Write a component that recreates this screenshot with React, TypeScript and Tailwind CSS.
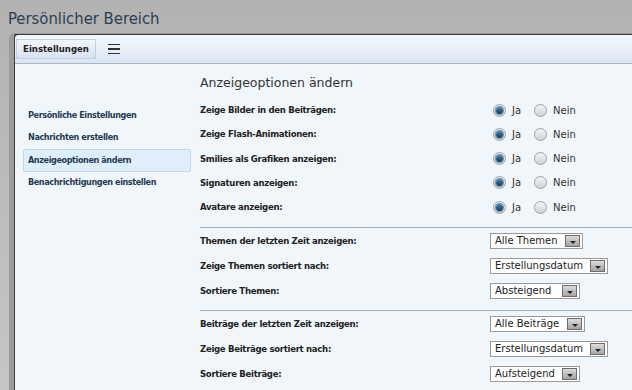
import React from "react";

const font = { fontFamily: "'DejaVu Sans', Verdana, sans-serif" };
const cond = { fontFamily: "'DejaVu Sans Condensed', 'DejaVu Sans', sans-serif" };

function Radio({ checked }: { checked?: boolean }) {
  return (
    <span className="relative inline-flex h-[13px] w-[13px] items-center justify-center rounded-full border border-[#9aa3ab] bg-gradient-to-b from-[#f4f4f4] to-[#cfd3d6]">
      {checked && (
        <span className="h-[7px] w-[7px] rounded-full bg-gradient-to-b from-[#4a86b4] to-[#0d3c63] shadow-[0_0_0_1px_#6a8aa6]" />
      )}
    </span>
  );
}

function YesNo() {
  return (
    <div className="flex items-center pl-[3px] text-[10px] text-[#333]">
      <Radio checked />
      <span className="ml-[6px] w-[22px]">Ja</span>
      <Radio />
      <span className="ml-[6px]">Nein</span>
    </div>
  );
}

function Select({ value, width }: { value: string; width: string }) {
  return (
    <div
      className={`flex h-[16px] items-center justify-between border border-[#9b9b9b] bg-white pl-[4px] pr-[2px] text-[10px] text-[#222] ${width}`}
    >
      <span className="leading-none">{value}</span>
      <span className="flex h-[12px] w-[15px] items-end justify-center border border-[#6e6e6e] bg-gradient-to-b from-[#dcdcdc] to-[#a4a4a4] pb-[2px]">
        <span className="h-0 w-0 border-x-[3px] border-t-[3px] border-x-transparent border-t-[#222]" />
      </span>
    </div>
  );
}

function Row({ label, children, h = "h-[24.25px]" }: { label: string; children: React.ReactNode; h?: string }) {
  return (
    <div className={`flex items-center ${h}`}>
      <span style={cond} className="w-[290px] whitespace-nowrap text-[9.5px] font-bold tracking-[-0.3px] text-[#222]">
        {label}
      </span>
      {children}
    </div>
  );
}

export default function App() {
  const nav = [
    "Persönliche Einstellungen",
    "Nachrichten erstellen",
    "Anzeigeoptionen ändern",
    "Benachrichtigungen einstellen",
  ];

  return (
    <div
      style={font}
      className="flex h-[390px] w-[632px] flex-col overflow-hidden bg-gradient-to-b from-[#b2b2b2] to-[#c6c6c6]"
    >
      <div style={cond} className="h-[33px] pl-[8px] pt-[8px] text-[16.5px] leading-[22px] text-[#2c3e50]">
        Persönlicher Bereich
      </div>
      <div className="ml-[9px] flex flex-1 flex-col rounded-tl-[6px] border-l-[5px] border-t border-[#9c9c9c] bg-[#3d3d3d] pl-[1px] pt-[1px]">
        <div className="flex flex-1 flex-col overflow-hidden rounded-tl-[4px] bg-[#f0f6fa]">
          <div className="flex h-[29px] items-center border-b border-[#a7b7c7] bg-gradient-to-b from-[#f4f8fd] to-[#dbe6f2] pl-[1px]">
            <div
              style={cond}
              className="flex h-[20px] w-[80px] items-center justify-center border border-[#c3cfdc] bg-gradient-to-b from-[#f2f6fb] to-[#d8e3ef] text-[9.5px] font-bold text-[#222]"
            >
              Einstellungen
            </div>
            <div className="ml-[12px] flex w-[12px] flex-col gap-[3px]">
              <span className="h-[1.5px] bg-[#333]" />
              <span className="h-[1.5px] bg-[#333]" />
              <span className="h-[1.5px] bg-[#333]" />
            </div>
          </div>
          <div className="flex flex-1">
            <div className="w-[185px] pl-[8px] pt-[40px]">
              {nav.map((n, i) => (
                <div
                  key={n}
                  style={cond}
                  className={`flex h-[22.5px] w-[168px] items-center whitespace-nowrap pl-[4px] text-[9px] font-bold tracking-[-0.4px] text-[#1f3a57] ${
                    i === 2 ? "rounded-[2px] border border-[#bcd8ee] bg-[#dfeefb]" : "border border-transparent"
                  }`}
                >
                  {n}
                </div>
              ))}
            </div>
            <div className="flex-1 pt-[11px]">
              <div className="mb-[7px] text-[12.5px] leading-[16px] text-[#333]">Anzeigeoptionen ändern</div>
              <Row label="Zeige Bilder in den Beiträgen:"><YesNo /></Row>
              <Row label="Zeige Flash-Animationen:"><YesNo /></Row>
              <Row label="Smilies als Grafiken anzeigen:"><YesNo /></Row>
              <Row label="Signaturen anzeigen:"><YesNo /></Row>
              <Row label="Avatare anzeigen:"><YesNo /></Row>
              <div className="mt-[8px] border-t border-[#a2acb6]" />
              <Row label="Themen der letzten Zeit anzeigen:" h="h-[25px]"><Select value="Alle Themen" width="w-[93px]" /></Row>
              <Row label="Zeige Themen sortiert nach:" h="h-[25px]"><Select value="Erstellungsdatum" width="w-[118px]" /></Row>
              <Row label="Sortiere Themen:" h="h-[25px]"><Select value="Absteigend" width="w-[90px]" /></Row>
              <div className="mt-[7px] border-t border-[#a2acb6]" />
              <Row label="Beiträge der letzten Zeit anzeigen:" h="h-[25px]"><Select value="Alle Beiträge" width="w-[95px]" /></Row>
              <Row label="Zeige Beiträge sortiert nach:" h="h-[25px]"><Select value="Erstellungsdatum" width="w-[118px]" /></Row>
              <Row label="Sortiere Beiträge:" h="h-[25px]"><Select value="Aufsteigend" width="w-[90px]" /></Row>
            </div>
          </div>
        </div>
      </div>
    </div>
  );
}
